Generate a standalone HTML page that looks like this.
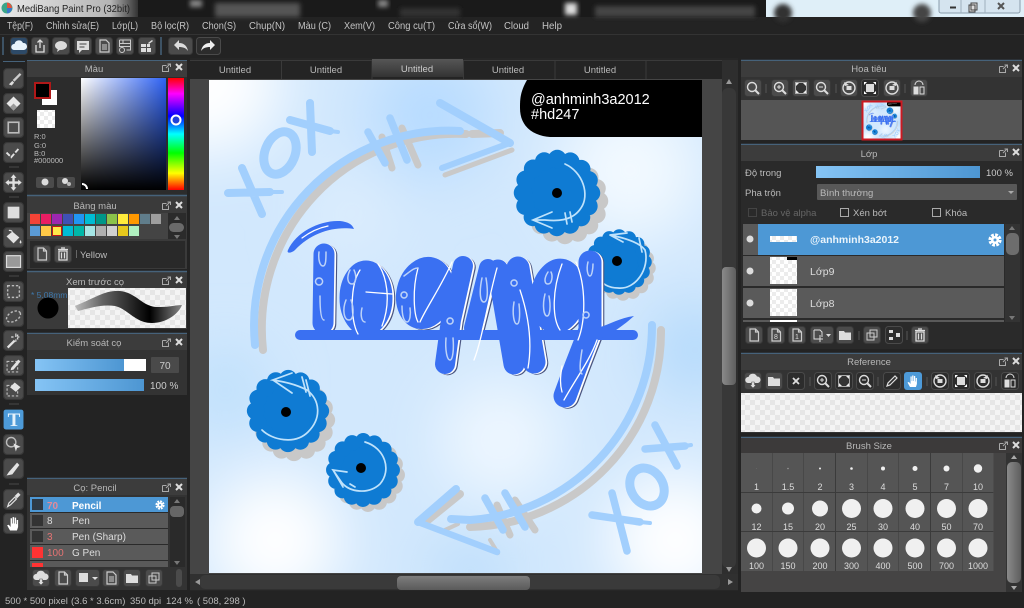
<!DOCTYPE html>
<html><head><meta charset="utf-8"><title>MediBang Paint Pro</title>
<style>
html,body{margin:0;padding:0;width:1024px;height:608px;background:#232323;overflow:hidden}
svg{display:block;overflow:hidden;filter:blur(.35px)}
text{font-family:"Liberation Sans","Noto Sans CJK SC",sans-serif;font-size:10px;fill:#c4c4c4}
.h{font-size:9.5px;fill:#b8b8b8;text-anchor:middle}
.s{font-size:9px;fill:#ddd;text-anchor:middle}
</style></head><body>
<svg xmlns="http://www.w3.org/2000/svg" width="1024" height="608" viewBox="0 0 1024 608">
<defs>
<pattern id="ck" width="8" height="8" patternUnits="userSpaceOnUse"><rect width="8" height="8" fill="#fff"/><rect width="4" height="4" fill="#ececec"/><rect x="4" y="4" width="4" height="4" fill="#ececec"/></pattern>
<pattern id="ck2" width="10" height="10" patternUnits="userSpaceOnUse"><rect width="10" height="10" fill="#f4f4f4"/><rect width="5" height="5" fill="#e6e6e6"/><rect x="5" y="5" width="5" height="5" fill="#e6e6e6"/></pattern>
<linearGradient id="bar" x1="0" x2="1"><stop offset="0" stop-color="#85c4f5"/><stop offset="1" stop-color="#4d96d2"/></linearGradient>
<linearGradient id="sv" x1="0" x2="1"><stop offset="0" stop-color="#fff"/><stop offset="1" stop-color="#2e62f5"/></linearGradient>
<linearGradient id="sv2" x1="0" x2="0" y1="0" y2="1"><stop offset="0" stop-color="#000" stop-opacity="0"/><stop offset="1" stop-color="#000"/></linearGradient>
<linearGradient id="hue" x1="0" x2="0" y1="0" y2="1"><stop offset="0" stop-color="#f00"/><stop offset=".14" stop-color="#f0f"/><stop offset=".34" stop-color="#00f"/><stop offset=".5" stop-color="#0ff"/><stop offset=".67" stop-color="#0f0"/><stop offset=".85" stop-color="#ff0"/><stop offset="1" stop-color="#f00"/></linearGradient>
<linearGradient id="tab" x1="0" x2="0" y1="0" y2="1"><stop offset="0" stop-color="#565656"/><stop offset="1" stop-color="#333"/></linearGradient>
<linearGradient id="tb" x1="0" x2="1"><stop offset="0" stop-color="#e8e8e8"/><stop offset=".8" stop-color="#b5b5b5"/><stop offset="1" stop-color="#333"/></linearGradient>
<linearGradient id="thv" x1="0" x2="1"><stop offset="0" stop-color="#8a8a8a"/><stop offset="1" stop-color="#5e5e5e"/></linearGradient>
<linearGradient id="thh" x1="0" x2="0" y1="0" y2="1"><stop offset="0" stop-color="#7d7d7d"/><stop offset="1" stop-color="#5a5a5a"/></linearGradient>
<filter id="b30" x="-30%" y="-30%" width="160%" height="160%"><feGaussianBlur stdDeviation="30"/></filter>
<filter id="b3" x="-30%" y="-100%" width="160%" height="300%"><feGaussianBlur stdDeviation="2.5"/></filter>
<clipPath id="cv"><rect x="209" y="80" width="493" height="493"/></clipPath>
<linearGradient id="stk" x1="0" x2="1"><stop offset="0" stop-color="#bbb"/><stop offset=".25" stop-color="#666"/><stop offset=".7" stop-color="#000"/><stop offset="1" stop-color="#888"/></linearGradient>

<g id="b"><rect x=".5" y=".5" width="17" height="17" rx="3" fill="#4b4b4b" stroke="#383838"/></g>
<g id="bd"><rect x=".5" y=".5" width="17" height="17" rx="3" fill="#2c2c2c" stroke="#4a4a4a"/></g>
<path id="pop" d="M.5 2.500h4M.5 2.500v6h6v-4M4 5l4-4M5.500 1H8.500V4" fill="none" stroke="#aaa"/>
<path id="x" d="M1 1l6 6M7 1l-6 6" stroke="#ddd" stroke-width="2" fill="none"/>
<g id="gear"><circle r="3.500" fill="#fff"/><circle r="4.500" fill="none" stroke="#fff" stroke-width="2.500" stroke-dasharray="2.400 1.130"/><circle r="1.300" fill="#4d98d5"/></g>

<g id="i-cloud"><path d="M4 13a3 3 0 0 1 .5-6 4.500 4.500 0 0 1 8.500-1 3.500 3.500 0 0 1 1 7z" fill="#e8f3fb"/></g>
<g id="i-share"><path d="M5 8v7h8V8M9 11V3M6.500 5.500L9 3l2.500 2.500" fill="none" stroke="#ddd" stroke-width="1.300"/></g>
<g id="i-bubble"><ellipse cx="9" cy="8.500" rx="6" ry="4.500" fill="#ddd"/><path d="M6 11l-1 4 4-3z" fill="#ddd"/></g>
<g id="i-comment"><path d="M3 4h12v9H8l-3 3v-3H3z" fill="#ddd"/><path d="M5.500 7h7M5.500 10h5" stroke="#444"/></g>
<g id="i-doc"><path d="M5 3h6l3 3v9H5z" fill="none" stroke="#ccc" stroke-width="1.200"/><path d="M7 8h5M7 10h5M7 12h5" stroke="#ccc"/></g>
<g id="i-list"><path d="M3.500 3h11v10h-4M3.500 3v7M3.500 6.500h11M3.500 9.500h11M7 3v4" fill="none" stroke="#ccc"/><circle cx="6" cy="13" r="2.500" fill="none" stroke="#ccc"/></g>
<g id="i-grid"><path d="M3 7h5v3H3zM9 7h3v3H9zM3 11h5v4H3zM9 11h4v4H9z" fill="#ddd"/><path d="M10 6l4-3 1 1-4 3z" fill="#ddd"/></g>
<g id="i-newdoc"><path d="M5 3h5.500L13.500 6v9H5zM10.500 3v3h3" fill="none" stroke="#ccc" stroke-width="1.200"/></g>
<g id="i-trash"><path d="M5 6v9h8V6zM4 4.500h10M7 3h4M7.500 7.500v6M10.500 7.500v6" fill="none" stroke="#ddd" stroke-width="1.300"/></g>
<g id="i-folder"><path d="M3 5h5l1 1.500h6V14H3z" fill="#ddd"/></g>
<g id="i-copy"><path d="M7 4h7v7H7zM4 7h7v7H4z" fill="#4b4b4b" stroke="#ccc"/></g>
<g id="i-merge"><path d="M4 4h4v3H4zM4 11h4v3H4zM11 7h4v4h-4z" fill="#ddd"/></g>
<g id="i-upload"><path d="M4 11a3 3 0 0 1 .5-6 4.500 4.500 0 0 1 8.500-.5 3.300 3.300 0 0 1 1 6.500z" fill="#ddd"/><path d="M7.500 10h3v3H12l-3 3-3-3h1.500z" fill="#ddd" stroke="#4b4b4b" stroke-width=".5"/></g>
<g id="i-z"><circle cx="8" cy="8" r="4.500" fill="none" stroke="#ddd" stroke-width="1.400"/><path d="M11 11l4 4" stroke="#ddd" stroke-width="2"/></g>
<g id="i-fit"><rect x="3.500" y="3.500" width="11" height="11" fill="#333" stroke="#aaa"/><path d="M4 4l3 0-3 3zM14 4v3l-3-3zM4 14v-3l3 3zM14 14h-3l3-3z" fill="#eee"/></g>
<g id="i-rl"><circle cx="9" cy="9" r="6" fill="none" stroke="#ddd" stroke-width="1.400"/><path d="M4 3l1 4 4-1z" fill="#ddd"/><rect x="6.500" y="7" width="5" height="4" fill="#ddd"/></g>
<g id="i-rr"><circle cx="9" cy="9" r="6" fill="none" stroke="#ddd" stroke-width="1.400"/><path d="M14 3l-1 4-4-1z" fill="#ddd"/><rect x="6.500" y="7" width="5" height="4" fill="#ddd"/></g>
<g id="i-center"><rect x="5" y="5" width="8" height="8" fill="#ddd"/><path d="M3 3l3 0-3 3zM15 3v3l-3-3zM3 15v-3l3 3zM15 15h-3l3-3z" fill="#fff"/></g>
<g id="i-flip"><path d="M4 15V8h4v7zM10 15V8h4v7z" fill="none" stroke="#ddd"/><path d="M4 8h4v7H4z" fill="#ddd"/><path d="M5 6a4 4 0 0 1 8 0" fill="none" stroke="#ddd"/></g>
<g id="i-pen"><path d="M4 14l1-3 7-7 2 2-7 7z" fill="none" stroke="#ddd" stroke-width="1.200"/></g>
<g id="i-hand"><path d="M6 15L3.500 10.500 5 10l1.500 2V4.500h1.200V9h.5V3.500h1.300V9h.5V4h1.200v5.500h.5V6h1.200v6l-1 3z" fill="#fff"/></g>

<g id="t-brush"><path d="M5 14l3-3 1.500 1.500-2 2.500z" fill="#ddd"/><path d="M9 11l6-6" stroke="#ccc" stroke-width="2"/></g>
<g id="t-eraser"><path d="M9 3l6 6-6 6-6-6z" fill="#e8e8e8"/><path d="M6 12l3-3 3 3-3 3z" fill="#999"/></g>
<g id="t-stroke"><rect x="4.500" y="4.500" width="9" height="9" fill="none" stroke="#bbb" stroke-width="1.400"/></g>
<g id="t-poly"><path d="M3 9l4 4 7-8" fill="none" stroke="#e2e2e2" stroke-width="1.600" stroke-dasharray="4 1.500"/></g>
<g id="t-move"><path d="M9 2l2.500 3H10v3h3V6.500L16 9l-3 2.500V10h-3v3h1.500L9 16l-2.500-3H8v-3H5v1.500L2 9l3-2.500V8h3V5H6.500z" fill="#e2e2e2"/></g>
<g id="t-fill"><rect x="4" y="4" width="10" height="10" fill="#ddd"/></g>
<g id="t-bucket"><path d="M3 8l5-4 6 5-5 5z" fill="#e2e2e2"/><path d="M8 4a3 3 0 0 0-3-1" stroke="#e2e2e2" fill="none"/><path d="M15 11c1 2 1 3 0 3s-1-1 0-3z" fill="#e2e2e2"/></g>
<g id="t-dr"><rect x="4" y="4" width="10" height="10" fill="none" stroke="#bbb" stroke-width="1.200" stroke-dasharray="2 1.500"/></g>
<g id="t-de"><ellipse cx="9" cy="9" rx="6.500" ry="4" transform="rotate(-30 9 9)" fill="none" stroke="#bbb" stroke-width="1.200" stroke-dasharray="2 1.500"/></g>
<g id="t-wand"><path d="M4 15l6-6" stroke="#e2e2e2" stroke-width="2"/><path d="M11 3v3M11 8v2M14 6h-2M9 6H7M13 4l-1 1M13 8l-1-1" stroke="#e2e2e2"/></g>
<g id="t-sp"><rect x="3.500" y="5.500" width="9" height="9" fill="none" stroke="#bbb" stroke-dasharray="2 1.500"/><path d="M7 11l6-7 2 1.500-6 7-2.500 .5z" fill="#e2e2e2"/></g>
<g id="t-se"><rect x="3.500" y="5.500" width="9" height="9" fill="none" stroke="#bbb" stroke-dasharray="2 1.500"/><path d="M10 3l5 4-4 4-5-4z" fill="#e2e2e2"/></g>
<g id="t-lasso"><circle cx="7" cy="7" r="4" fill="none" stroke="#bbb" stroke-width="1.200"/><path d="M9 8l6 3-3 1-1 3z" fill="#e2e2e2"/></g>
<g id="t-knife"><path d="M3 15l2-3 7-8 2 2-6 8z" fill="#e2e2e2"/></g>
<g id="t-drop"><path d="M4 15l1-3 5-5 1.500 1.500-5 5z" fill="none" stroke="#e2e2e2"/><path d="M10 6l3-3 2 2-3 3z" fill="#e2e2e2"/></g>

<g id="fl"><circle r="34" fill="#0f7bd3"/><circle r="33" fill="none" stroke="#0f7bd3" stroke-width="18" stroke-linecap="round" stroke-dasharray="0 12.959"/></g>
<g id="fg"><circle r="34" fill="#c8c8c8"/><circle r="33" fill="none" stroke="#c8c8c8" stroke-width="18" stroke-linecap="round" stroke-dasharray="0 12.959"/></g>

<g id="lshape" stroke-linecap="round" stroke-linejoin="round" fill="none">
<path d="M324 254L323 323" stroke-width="21"/>
<ellipse cx="366" cy="298" rx="26" ry="37" fill="currentColor"/>
<ellipse cx="425" cy="293" rx="28" ry="36" transform="rotate(14 425 293)" fill="currentColor"/>
<path d="M463 266L451 320L445 364" stroke-width="20"/>
<path d="M488 268L473 328" stroke-width="18"/>
<path d="M498 270L514 364" stroke-width="21"/>
<path d="M518 268L534 362" stroke-width="23"/>
<ellipse cx="558" cy="296" rx="27" ry="37" transform="rotate(8 558 296)" fill="currentColor"/>
<path d="M590 262L590 330L576 366L565 396" stroke-width="23"/>
</g>
<g id="art">
<rect x="209" y="80" width="493" height="493" fill="#d2e8fd"/>
<g clip-path="url(#cv)">
<g filter="url(#b30)">
<circle cx="205" cy="80" r="75" fill="#fff"/>
<circle cx="275" cy="540" r="66" fill="#fff"/>
<circle cx="675" cy="540" r="66" fill="#fff"/>
<circle cx="500" cy="440" r="60" fill="#eef7ff"/>
<circle cx="630" cy="170" r="70" fill="#f2f9ff"/>
<circle cx="430" cy="115" r="60" fill="#b7dbff"/>
<circle cx="225" cy="390" r="40" fill="#bcdffc"/>
<circle cx="695" cy="350" r="45" fill="#b2d9fb"/>
<circle cx="470" cy="572" r="35" fill="#b9dcfa"/>
<circle cx="350" cy="215" r="40" fill="#deeefd"/>
</g>
<g fill="none" stroke-linecap="round" stroke="#c9c9c9" stroke-width="8">
<path d="M466 134A195 195 0 0 0 263 350"/>
<path d="M472 134L500 133"/>
<path d="M661 330A195 195 0 0 1 470 527"/>
<path d="M382 137L392 168M402 128L418 165" stroke-width="7"/>
<path d="M497 505L510 535M515 500L535 530" stroke-width="7"/>
<path d="M445 175L512 150" stroke-width="5"/>
<path d="M460 494L428 520" stroke-width="8"/>
<path d="M445 530L458 524M490 540L498 553" stroke-width="4"/>
</g>
<g fill="none" stroke-linecap="round" stroke="#a2cffd" stroke-width="8">
<path d="M460 131A195 195 0 0 0 255 345"/>
<path d="M440 103L510 143" stroke-width="8"/>
<path d="M510 143L442 168" stroke-width="6"/>
<path d="M368 132L385 163M390 118L407 160" stroke-width="7.500"/>
<path d="M652 325A195 195 0 0 1 470 520L451 519"/>
<path d="M485 498L503 530M505 493L525 527" stroke-width="7.500"/>
<path d="M456 489L418 522" stroke-width="8"/>
<path d="M418 522L497 552" stroke-width="6.500"/>
<path d="M242 168L262 214M228 193L270 192M310 103L312 152M290 120L330 131" stroke-width="8"/>
<path d="M282 192L270 192M338 132L330 131" stroke-width="4"/>
<path d="M612 493L627 551M592 515L640 522M655 425L677 466M645 449L685 446" stroke-width="7.500"/>
<path d="M640 522L650 523M685 446L691 445" stroke-width="4"/>
<ellipse cx="280" cy="153" rx="15" ry="22" transform="rotate(22 280 153)" stroke-width="9"/>
<ellipse cx="647" cy="487" rx="16" ry="20" transform="rotate(-32 647 487)" stroke-width="9"/>
</g>
<use href="#fg" transform="translate(565,201) scale(1.030)"/>
<use href="#fg" transform="translate(623,268) scale(.78)"/>
<use href="#fg" transform="translate(294,420) scale(.98)"/>
<use href="#fg" transform="translate(368,475) scale(.88)"/>
<use href="#fl" transform="translate(557,193) scale(1.030)"/>
<use href="#fl" transform="translate(619,262) scale(.78)"/>
<use href="#fl" transform="translate(288,411) scale(.98)"/>
<use href="#fl" transform="translate(363,470) scale(.88)"/>
<g fill="#000"><circle cx="557" cy="193" r="5"/><circle cx="617" cy="261" r="5"/><circle cx="286" cy="412" r="5"/><circle cx="361" cy="468" r="5"/></g>
<g fill="none" stroke="#bfe2fb" stroke-width="1.700" stroke-linecap="round">
<path d="M565 164C583 172 590 195 581 208C572 222 555 221 545 220L533 220M552 212L533 220L552 228M565 213L567 224M570 212L572 222"/>
<path d="M645 250C650 268 636 290 618 288C608 288 602 284 598 277M645 250C640 243 625 238 610 235L627 233M610 235L623 242M639 238L642 252"/>
<path d="M262 430C272 440 295 445 308 432C322 418 320 400 307 390C295 384 285 382 273 380L292 373M273 380L292 393M302 377L306 392M306 380L310 396"/>
<path d="M365 442C385 448 392 470 380 484C368 495 350 492 342 483L333 470L347 472M333 470L343 487M350 484L355 487"/>
</g>
<use href="#lshape" transform="translate(2.800,1.200)" stroke="#4a5580" color="#4a5580"/>
<use href="#lshape" transform="translate(1.700,.5)" stroke="#fff" color="#fff"/>
<rect x="295" y="330" width="343" height="10" rx="5" fill="#3a70f2"/>
<use href="#lshape" stroke="#3a70f2" color="#3a70f2"/>
<path d="M598 328C610 324 620 318 634 316C625 324 610 336 596 340z" fill="#3a70f2"/>
<path d="M288 250C296 232 320 220 340 221C348 222 352 224 354 229C335 226 312 232 295 250C292 253 286 254 288 250z" fill="#3a70f2"/>
<g fill="none" stroke="#fff" stroke-width="1.300" stroke-linecap="round">
<path d="M360 270C350 285 350 320 358 334M378 264C386 275 392 300 382 326M366 292L392 294"/>
<path d="M418 268C412 290 414 315 418 322M452 262C442 285 425 310 420 322"/>
<path d="M474 360C482 340 488 300 497 268M520 290C530 320 532 345 528 368"/>
<path d="M562 264C552 290 552 318 560 330M576 262C586 285 586 320 578 340M564 400C575 380 590 360 597 340M562 366C560 378 560 385 562 392"/>
<path d="M302 238C310 232 318 228 328 226" stroke-width="1.200"/>
</g>
<g fill="none" stroke="#bcd2f8" stroke-width="1.500" stroke-linecap="round">
<path d="M319 252c-1 8 1 14 4 14s3-7 3-14M319 278a3.500 3.500 0 1 0 .1 0M320 296c0 14 1 24 4 24"/>
<path d="M350 270c-4 8-2 14 2 14s5-8 2-14M346 300c-4 10-2 20 3 20s5-12 2-20M362 308c-2 8 0 14 3 14"/>
<path d="M404 276c8-6 10-8 14-8M404 292a3 3 0 1 0 .1 0M402 306c0 10 2 16 5 16s4-8 3-14"/>
<path d="M450 318a3 3 0 1 0 .1 0M446 338c-1 12 1 22 4 22s4-12 3-22"/>
<path d="M482 278c-3 14-2 24 2 24s4-12 2-24M514 280a3 3 0 1 0 .1 0M514 302c-2 12 0 22 3 22s3-12 2-20"/>
<path d="M548 272c-4 6-4 12 0 12s5-8 3-12M545 294c-3 12-1 22 2 22s4-10 2-20M588 262c-2 8 0 14 2 14s3-8 3-12M586 312a3 3 0 1 0 .1 0M582 350c-2 12-3 22 0 24"/>
</g>
<path d="M527 80C520 92 520 100 520 108C520 128 535 136 550 137L702 137L702 80Z" fill="#000"/>
<text x="531" y="104" style="font-size:14.500px;fill:#fff">@anhminh3a2012</text>
<text x="531" y="119" style="font-size:14.500px;fill:#fff">#hd247</text>
</g>
</g>
</defs>

<rect width="1024" height="608" fill="#232323"/>

<!-- title bar -->
<rect x="0" y="0" width="1024" height="17" fill="#1a1a1a"/>
<rect x="0" y="0" width="138" height="17" fill="url(#tb)"/>
<g>
<rect x="190" y="0" width="12" height="7" fill="#888" filter="url(#b3)"/>
<rect x="215" y="3" width="85" height="14" fill="#555" filter="url(#b3)"/>
<rect x="378" y="0" width="10" height="7" fill="#888" filter="url(#b3)"/>
<rect x="400" y="8" width="60" height="9" fill="#333" filter="url(#b3)"/>
<rect x="565" y="3" width="12" height="12" fill="#ddd" filter="url(#b3)"/>
<rect x="595" y="6" width="160" height="11" fill="#444" filter="url(#b3)"/>
</g>
<rect x="766" y="0" width="258" height="17" fill="#dfeff8"/>
<circle cx="783" cy="13" r="9" fill="#333" filter="url(#b3)"/>
<circle cx="922" cy="13" r="9" fill="#444" filter="url(#b3)"/>
<rect x="939" y="-2" width="81" height="15" rx="2" fill="#d5e4ef" stroke="#8a9cab"/>
<path d="M961 0v13M985 0v13" stroke="#9fb0bd"/>
<path d="M950 7.500h6" stroke="#333" stroke-width="2"/>
<path d="M971 3h6v7h-6zM969 5h6v7h-6z" fill="#ddd" stroke="#444"/>
<path d="M998 3l6 6M1004 3l-6 6" stroke="#555" stroke-width="2"/>
<circle cx="7" cy="8" r="5.500" fill="#3aa58a"/><path d="M7 8V2.500A5.500 5.500 0 0 1 12 8z" fill="#e0533d"/><path d="M7 8h5a5.500 5.500 0 0 1-5 5.500z" fill="#3a76c8"/>
<text x="17" y="12" style="font-size:10.500px;fill:#222" textLength="113" lengthAdjust="spacingAndGlyphs">MediBang Paint Pro (32bit)</text>

<!-- menu -->
<g>
<text x="7" y="29" textLength="26" lengthAdjust="spacingAndGlyphs">Tệp(F)</text>
<text x="46" y="29" textLength="53" lengthAdjust="spacingAndGlyphs">Chỉnh sửa(E)</text>
<text x="112" y="29" textLength="26" lengthAdjust="spacingAndGlyphs">Lớp(L)</text>
<text x="151" y="29" textLength="38" lengthAdjust="spacingAndGlyphs">Bộ lọc(R)</text>
<text x="202" y="29" textLength="34" lengthAdjust="spacingAndGlyphs">Chọn(S)</text>
<text x="249" y="29" textLength="36" lengthAdjust="spacingAndGlyphs">Chụp(N)</text>
<text x="298" y="29" textLength="33" lengthAdjust="spacingAndGlyphs">Màu (C)</text>
<text x="344" y="29" textLength="31" lengthAdjust="spacingAndGlyphs">Xem(V)</text>
<text x="388" y="29" textLength="47" lengthAdjust="spacingAndGlyphs">Công cụ(T)</text>
<text x="448" y="29" textLength="44" lengthAdjust="spacingAndGlyphs">Cửa sổ(W)</text>
<text x="504" y="29" textLength="25" lengthAdjust="spacingAndGlyphs">Cloud</text>
<text x="542" y="29" textLength="20" lengthAdjust="spacingAndGlyphs">Help</text>
</g>
<path d="M0 34.500h1024" stroke="#333"/>
<path d="M3 37v18M161 37v18" stroke="#46627a" stroke-width="1.500"/>

<!-- toolbar -->
<g transform="translate(10,37)"><rect x=".5" y=".5" width="17" height="17" rx="3" fill="#2d4a68" stroke="#3a3a3a"/><use href="#i-cloud"/></g>
<g transform="translate(31,37)"><use href="#b"/><use href="#i-share"/></g>
<g transform="translate(52,37)"><use href="#b"/><use href="#i-bubble"/></g>
<g transform="translate(74,37)"><use href="#b"/><use href="#i-comment"/></g>
<g transform="translate(95,37)"><use href="#b"/><use href="#i-doc"/></g>
<g transform="translate(116,37)"><use href="#b"/><use href="#i-list"/></g>
<g transform="translate(138,37)"><use href="#b"/><use href="#i-grid"/></g>
<rect x="168.500" y="37.500" width="24" height="17" rx="3" fill="#4b4b4b" stroke="#383838"/>
<path d="M174 45l5-5v3c5 0 8 3 9 8-2-3-5-4-9-4v3z" fill="#ddd"/>
<rect x="196.500" y="37.500" width="24" height="17" rx="3" fill="#2c2c2c" stroke="#4a4a4a"/>
<path d="M215 45l-5-5v3c-5 0-8 3-9 8 2-3 5-4 9-4v3z" fill="#eee"/>

<!-- left tool strip -->
<path d="M3 61.500h22" stroke="#46627a"/>
<g>
<g transform="translate(3,68) scale(1.170)"><use href="#b"/><use href="#t-brush"/></g>
<g transform="translate(3,93) scale(1.170)"><use href="#b"/><use href="#t-eraser"/></g>
<g transform="translate(3,117) scale(1.170)"><use href="#b"/><use href="#t-stroke"/></g>
<g transform="translate(3,142) scale(1.170)"><use href="#b"/><use href="#t-poly"/></g>
<g transform="translate(3,172) scale(1.170)"><use href="#b"/><use href="#t-move"/></g>
<g transform="translate(3,202) scale(1.170)"><use href="#b"/><use href="#t-fill"/></g>
<g transform="translate(3,227) scale(1.170)"><use href="#b"/><use href="#t-bucket"/></g>
<g transform="translate(3,251) scale(1.170)"><use href="#b"/><rect x="3" y="4" width="12" height="10" fill="#999" stroke="#ddd"/></g>
<g transform="translate(3,281) scale(1.170)"><use href="#b"/><use href="#t-dr"/></g>
<g transform="translate(3,306) scale(1.170)"><use href="#b"/><use href="#t-de"/></g>
<g transform="translate(3,330) scale(1.170)"><use href="#b"/><use href="#t-wand"/></g>
<g transform="translate(3,355) scale(1.170)"><use href="#b"/><use href="#t-sp"/></g>
<g transform="translate(3,379) scale(1.170)"><use href="#b"/><use href="#t-se"/></g>
<g transform="translate(3,409) scale(1.170)"><rect x=".5" y=".5" width="17" height="17" rx="2" fill="#4d9ad8"/></g>
<text x="14" y="426" style="font-family:'Liberation Serif',serif;font-size:19px;font-weight:bold;fill:#e6f2fb;text-anchor:middle">T</text>
<g transform="translate(3,434) scale(1.170)"><use href="#b"/><use href="#t-lasso"/></g>
<g transform="translate(3,458) scale(1.170)"><use href="#b"/><use href="#t-knife"/></g>
<g transform="translate(3,489) scale(1.170)"><use href="#b"/><use href="#t-drop"/></g>
<g transform="translate(3,513) scale(1.170)"><use href="#b"/><use href="#i-hand"/></g>
</g>
<path d="M9 167h10M9 197h10M9 276h10M9 404h10M9 484h10" stroke="#4a4a4a"/>

<!-- Colour panel -->
<rect x="27" y="60" width="160" height="135" fill="#2c2c2c"/>
<rect x="27" y="60" width="160" height="17" fill="#3c3c3c"/><path d="M27 60.500h160" stroke="#46627a"/>
<text class="h" x="94" y="72">Màu</text>
<use href="#pop" x="162" y="63"/><use href="#x" x="175" y="63"/>
<rect x="81" y="78" width="85" height="112" fill="url(#sv)"/><rect x="81" y="78" width="85" height="112" fill="url(#sv2)"/>
<rect x="168" y="78" width="16" height="112" fill="url(#hue)"/>
<circle cx="176" cy="120" r="4.500" fill="#2242d8" stroke="#fff" stroke-width="2"/>
<path d="M82 184a5 5 0 0 1 5 5" stroke="#fff" stroke-width="2" fill="none"/>
<rect x="42" y="90" width="15" height="15" fill="#fff"/>
<rect x="35" y="83" width="15" height="15" fill="#000" stroke="#b01818" stroke-width="2"/>
<rect x="37" y="110" width="18" height="18" fill="url(#ck)"/>
<text x="34" y="139" style="font-size:7.500px;fill:#bbb">R:0</text><text x="34" y="148" style="font-size:7.500px;fill:#bbb">G:0</text><text x="34" y="156" style="font-size:7.500px;fill:#bbb">B:0</text><text x="34" y="163" style="font-size:7.500px;fill:#bbb">#000000</text>
<rect x="36" y="177" width="18" height="11" rx="2" fill="#4b4b4b"/><circle cx="45" cy="182" r="3.500" fill="#ddd"/>
<rect x="57" y="177" width="18" height="11" rx="2" fill="#4b4b4b"/><circle cx="65" cy="181" r="3" fill="#ddd"/><circle cx="69" cy="184" r="2" fill="#bbb"/>

<!-- Palette panel -->
<rect x="27" y="195" width="160" height="74" fill="#3a3a3a"/><path d="M27 195.500h160" stroke="#46627a" stroke-width="1.500"/>
<text class="h" x="95" y="209">Bảng màu</text>
<use href="#pop" x="162" y="201"/><use href="#x" x="175" y="201"/>
<rect x="27" y="213" width="141" height="26" fill="#444"/>
<rect x="168" y="213" width="18" height="26" fill="#2b2b2b"/>
<rect x="169" y="223" width="15" height="9" rx="4.500" fill="#6a6a6a"/>
<path d="M177 216l3 4h-6zM177 239l3-4h-6z" fill="#777"/>
<g>
<rect x="30" y="214" width="10" height="10" fill="#f44336"/><rect x="41" y="214" width="10" height="10" fill="#e91e63"/><rect x="52" y="214" width="10" height="10" fill="#9c27b0"/><rect x="63" y="214" width="10" height="10" fill="#3f51b5"/><rect x="74" y="214" width="10" height="10" fill="#2196f3"/><rect x="85" y="214" width="10" height="10" fill="#00bcd4"/><rect x="96" y="214" width="10" height="10" fill="#009688"/><rect x="107" y="214" width="10" height="10" fill="#8bc34a"/><rect x="118" y="214" width="10" height="10" fill="#ffeb3b"/><rect x="129" y="214" width="10" height="10" fill="#ff9800"/><rect x="140" y="214" width="10" height="10" fill="#607d8b"/><rect x="151" y="214" width="10" height="10" fill="#9e9e9e"/>
<rect x="30" y="226" width="10" height="10" fill="#5b9bd5"/><rect x="41" y="226" width="10" height="10" fill="#ffc947"/><rect x="52.500" y="226.500" width="9" height="9" fill="#ffe94a" stroke="#c01818"/><rect x="63" y="226" width="10" height="10" fill="#00bcd4"/><rect x="74" y="226" width="10" height="10" fill="#00b8a9"/><rect x="85" y="226" width="10" height="10" fill="#a5e5e5"/><rect x="96" y="226" width="10" height="10" fill="#b0b0b0"/><rect x="107" y="226" width="10" height="10" fill="#d0d0d0"/><rect x="118" y="226" width="10" height="10" fill="#e6c91c"/><rect x="129" y="226" width="10" height="10" fill="#b0f0c0"/>
</g>
<rect x="30" y="241" width="155" height="27" fill="#292929"/>
<g transform="translate(33,245)"><use href="#b"/><use href="#i-newdoc"/></g>
<g transform="translate(54,245)"><use href="#b"/><use href="#i-trash"/></g>
<path d="M76.500 250v8" stroke="#666"/>
<text x="80" y="258" style="font-size:9.500px;fill:#bbb">Yellow</text>

<!-- Brush preview -->
<rect x="27" y="271" width="160" height="58" fill="#3a3a3a"/><path d="M27 271.500h160" stroke="#46627a" stroke-width="1.500"/>
<text class="h" x="95" y="285">Xem trước cọ</text>
<use href="#pop" x="162" y="276"/><use href="#x" x="175" y="276"/>
<rect x="68" y="288" width="118" height="40" fill="url(#ck2)"/>
<text x="31" y="298" style="font-size:8.500px;fill:#3f78ab">* 5.08mm</text>
<circle cx="48" cy="308" r="10.500" fill="#000"/>
<path d="M75 306C95 298 105 290 120 291C138 293 142 308 160 307C170 307 176 305 182 305C178 315 165 323 152 323C135 323 128 309 115 306C102 304 90 308 78 311Z" fill="url(#stk)"/>

<!-- Brush control -->
<rect x="27" y="333" width="160" height="62" fill="#333"/><path d="M27 333.500h160" stroke="#46627a" stroke-width="1.500"/>
<rect x="27" y="334" width="160" height="16" fill="#3c3c3c"/>
<text class="h" x="94" y="346">Kiểm soát cọ</text>
<use href="#pop" x="162" y="338"/><use href="#x" x="175" y="338"/>
<rect x="35" y="359" width="111" height="12" fill="#fff"/><rect x="35" y="359" width="89" height="12" fill="url(#bar)"/>
<rect x="151" y="357" width="28" height="16" rx="1" fill="#4a4a4a"/><text x="165" y="369" style="font-size:10px;fill:#ccc;text-anchor:middle">70</text>
<rect x="35" y="379" width="109" height="12" fill="url(#bar)"/>
<text x="150" y="389" style="font-size:10px;fill:#ccc">100 %</text>

<!-- Brush panel -->
<rect x="27" y="478" width="160" height="112" fill="#333"/><path d="M27 478.500h160" stroke="#46627a" stroke-width="1.500"/>
<rect x="27" y="479" width="160" height="16" fill="#3c3c3c"/>
<text class="h" x="95" y="491">Cọ: Pencil</text>
<use href="#pop" x="162" y="483"/><use href="#x" x="175" y="483"/>
<rect x="30" y="497" width="138" height="70" fill="#2a2a2a"/>
<rect x="30" y="497" width="138" height="15" fill="#4d98d5"/>
<rect x="30" y="513" width="138" height="15" fill="#5a5a5a"/>
<rect x="30" y="529" width="138" height="15" fill="#5a5a5a"/>
<rect x="30" y="545" width="138" height="15" fill="#5a5a5a"/>
<rect x="30" y="561" width="138" height="6" fill="#5a5a5a"/>
<rect x="32" y="499" width="11" height="11" fill="#2f3a44"/><rect x="32" y="515" width="11" height="11" fill="#333"/><rect x="32" y="531" width="11" height="11" fill="#333"/><rect x="32" y="547" width="11" height="11" fill="#f33"/><rect x="32" y="563" width="11" height="4" fill="#f33"/>
<text x="47" y="509" style="font-weight:bold;fill:#e38a9a">70</text><text x="72" y="509" style="font-weight:bold;fill:#fff">Pencil</text>
<text x="47" y="524" style="fill:#ddd">8</text><text x="72" y="524" style="fill:#ddd">Pen</text>
<text x="47" y="540" style="fill:#e57373">3</text><text x="72" y="540" style="fill:#ddd">Pen (Sharp)</text>
<text x="47" y="556" style="fill:#e57373">100</text><text x="72" y="556" style="fill:#ddd">G Pen</text>
<use href="#gear" transform="translate(160,505) scale(.8)"/>
<rect x="170" y="497" width="15" height="70" fill="#2a2a2a"/>
<rect x="170" y="506" width="14" height="11" rx="4" fill="#666"/>
<path d="M177 499l3 4h-6zM177 565l3-4h-6z" fill="#777"/>
<g transform="translate(32,569)"><use href="#b"/><use href="#i-upload"/></g>
<g transform="translate(54,569)"><use href="#b"/><use href="#i-newdoc"/></g>
<rect x="75.500" y="569.500" width="24" height="17" rx="3" fill="#4b4b4b" stroke="#383838"/><rect x="79" y="573" width="9" height="9" fill="#ddd"/><path d="M92 577h6l-3 3z" fill="#ddd"/>
<g transform="translate(102,569)"><use href="#b"/><use href="#i-doc"/></g>
<g transform="translate(123,569)"><use href="#b"/><use href="#i-folder"/></g>
<g transform="translate(145,569)"><use href="#b"/><use href="#i-copy"/></g>
<rect x="176" y="569" width="6" height="18" rx="3" fill="#4b4b4b"/>

<!-- centre -->
<rect x="190" y="58" width="548" height="533" fill="#262626"/>
<rect x="190" y="60" width="532" height="515" fill="#454545"/>
<rect x="190" y="60" width="532" height="19" fill="#242424"/>
<path d="M190 60.500h532M281.500 60v19M372 60v19M463.500 60v19M555 60v19M646 60v19" stroke="#3a3a3a"/>
<rect x="372" y="59" width="91" height="18" fill="url(#tab)"/>
<text class="h" x="235" y="73">Untitled</text><text class="h" x="326" y="73">Untitled</text><text class="h" x="417" y="72" style="fill:#ccc">Untitled</text><text class="h" x="508" y="73">Untitled</text><text class="h" x="600" y="73">Untitled</text>
<use href="#art"/>
<rect x="722" y="60" width="16" height="515" fill="#2e2e2e"/>
<rect x="722" y="88" width="14" height="480" rx="6" fill="#383838"/>
<rect x="722" y="267" width="14" height="118" rx="4" fill="url(#thv)"/>
<path d="M729 79l3 5h-6zM729 572l3-5h-6z" fill="#999"/>
<rect x="190" y="574" width="548" height="16" fill="#303030"/>
<rect x="200" y="575" width="520" height="14" rx="5" fill="#3a3a3a"/>
<rect x="397" y="576" width="133" height="14" rx="4" fill="url(#thh)"/>
<path d="M195 582l5-3v6zM733 582l-5-3v6z" fill="#999"/>

<!-- status -->
<text x="5" y="604" style="font-size:9.500px;fill:#bbb">500 * 500 pixel</text>
<text x="71" y="604" style="font-size:9.500px;fill:#bbb">(3.6 * 3.6cm)</text>
<text x="130" y="604" style="font-size:9.500px;fill:#bbb">350 dpi</text>
<text x="166" y="604" style="font-size:9.500px;fill:#bbb">124 %</text>
<text x="197" y="604" style="font-size:9.500px;fill:#bbb">( 508, 298 )</text>

<!-- Navigator -->
<rect x="741" y="60" width="281" height="80" fill="#555"/>
<path d="M741 60.500h281" stroke="#46627a" stroke-width="1.500"/>
<rect x="741" y="61" width="281" height="16" fill="#3c3c3c"/>
<text class="h" x="869" y="72">Hoa tiêu</text>
<use href="#pop" x="999" y="64"/><use href="#x" x="1012" y="64"/>
<rect x="741" y="77" width="281" height="23" fill="#333"/>
<g transform="translate(744,79)"><use href="#b"/><use href="#i-z"/></g>
<g transform="translate(771,79)"><use href="#b"/><use href="#i-z"/><path d="M6 8h4M8 6v4" stroke="#ddd"/></g>
<g transform="translate(792,79)"><use href="#b"/><use href="#i-fit"/></g>
<g transform="translate(813,79)"><use href="#b"/><use href="#i-z"/><path d="M6 8h4" stroke="#ddd"/></g>
<g transform="translate(840,79)"><use href="#b"/><use href="#i-rl"/></g>
<g transform="translate(861,79)"><use href="#bd"/><use href="#i-center"/></g>
<g transform="translate(883,79)"><use href="#b"/><use href="#i-rr"/></g>
<g transform="translate(910,79)"><use href="#b"/><use href="#i-flip"/></g>
<path d="M766 84v9M836 84v9M905 84v9" stroke="#555"/>
<g transform="translate(863,102) scale(.0771) translate(-209,-80)"><use href="#art"/></g>
<rect x="862.500" y="101.500" width="39" height="38" fill="none" stroke="#cc1a22" stroke-width="2"/>

<!-- Layer -->
<rect x="741" y="144" width="281" height="205" fill="#2a2a2a"/>
<path d="M741 144.500h281" stroke="#46627a" stroke-width="1.500"/>
<rect x="741" y="145" width="281" height="16" fill="#3c3c3c"/>
<text class="h" x="869" y="157">Lớp</text>
<use href="#pop" x="999" y="148"/><use href="#x" x="1012" y="148"/>
<text x="745" y="176" style="font-size:9.500px;fill:#bbb">Độ trong</text>
<rect x="816" y="166" width="164" height="12" fill="url(#bar)"/>
<text x="986" y="176" style="font-size:9.500px;fill:#ccc">100 %</text>
<text x="745" y="196" style="font-size:9.500px;fill:#bbb">Pha trộn</text>
<rect x="817" y="184" width="200" height="16" rx="1" fill="#585858"/>
<text x="820" y="196" style="font-size:9.500px;fill:#bbb">Bình thường</text>
<path d="M1008 191h6l-3 3z" fill="#aaa"/>
<rect x="748.500" y="208.500" width="8" height="8" fill="none" stroke="#444"/>
<text x="761" y="216" style="font-size:9.500px;fill:#666">Bảo vệ alpha</text>
<rect x="840.500" y="208.500" width="8" height="8" fill="none" stroke="#aaa"/>
<text x="853" y="216" style="font-size:9.500px;fill:#bbb">Xén bớt</text>
<rect x="932.500" y="208.500" width="8" height="8" fill="none" stroke="#aaa"/>
<text x="945" y="216" style="font-size:9.500px;fill:#bbb">Khóa</text>
<rect x="743" y="224" width="261" height="98" fill="#2a2a2a"/>
<rect x="743" y="224" width="15" height="31" fill="#5a5a5a"/><rect x="758" y="224" width="246" height="31" fill="#4d98d5"/>
<rect x="743" y="256" width="261" height="30" fill="#5a5a5a"/>
<rect x="743" y="288" width="261" height="30" fill="#5a5a5a"/>
<rect x="743" y="320" width="261" height="2" fill="#5a5a5a"/>
<circle cx="750" cy="239" r="3.500" fill="#ddd"/><circle cx="750" cy="271" r="3.500" fill="#ddd"/><circle cx="750" cy="303" r="3.500" fill="#ddd"/>
<rect x="770" y="236" width="27" height="6" fill="url(#ck)"/>
<rect x="770" y="257" width="27" height="27" fill="url(#ck)"/><rect x="787" y="257" width="10" height="3" fill="#000"/>
<rect x="770" y="289" width="27" height="27" fill="url(#ck)"/>
<rect x="770" y="320" width="27" height="2" fill="#fff"/>
<text x="810" y="243" style="font-size:10.500px;font-weight:bold;fill:#eaf4fb">@anhminh3a2012</text>
<text x="810" y="275" style="font-size:10.500px;fill:#ddd">Lớp9</text>
<text x="810" y="307" style="font-size:10.500px;fill:#ddd">Lớp8</text>
<use href="#gear" transform="translate(995,240) scale(1.150)"/>
<rect x="1005" y="224" width="15" height="98" fill="#333"/>
<rect x="1006" y="233" width="13" height="22" rx="5" fill="#6d6d6d"/>
<path d="M1012 226l3 4h-6zM1012 320l3-4h-6z" fill="#777"/>
<g transform="translate(745,326)"><use href="#b"/><use href="#i-newdoc"/></g>
<g transform="translate(767,326)"><use href="#b"/><use href="#i-newdoc"/><text x="9" y="13" style="font-size:7px;fill:#ddd;text-anchor:middle">8</text></g>
<g transform="translate(788,326)"><use href="#b"/><use href="#i-newdoc"/><text x="9" y="13" style="font-size:7px;fill:#ddd;text-anchor:middle">1</text></g>
<rect x="810.500" y="326.500" width="23" height="17" rx="3" fill="#4b4b4b" stroke="#383838"/><path d="M814 330h6l2 2v5M814 330v9h3M820 335v7M817 339h6" stroke="#ddd" fill="none"/><path d="M826 334h5l-2.500 3z" fill="#ddd"/>
<g transform="translate(836,326)"><use href="#b"/><use href="#i-folder"/></g>
<g transform="translate(863,326)"><use href="#b"/><use href="#i-copy"/></g>
<g transform="translate(885,326)"><use href="#bd"/><use href="#i-merge"/></g>
<g transform="translate(911,326)"><use href="#b"/><use href="#i-trash"/></g>
<path d="M859 331v9M907 331v9" stroke="#555"/>

<!-- Reference -->
<rect x="741" y="353" width="281" height="80" fill="#333"/>
<path d="M741 353.500h281" stroke="#46627a" stroke-width="1.500"/>
<rect x="741" y="354" width="281" height="16" fill="#3c3c3c"/>
<text class="h" x="869" y="365">Reference</text>
<use href="#pop" x="999" y="357"/><use href="#x" x="1012" y="357"/>
<g transform="translate(744,372)"><use href="#b"/><use href="#i-upload"/></g>
<g transform="translate(765,372)"><use href="#b"/><use href="#i-folder"/></g>
<g transform="translate(787,372)"><use href="#bd"/><path d="M6 6l6 6M12 6l-6 6" stroke="#ddd" stroke-width="1.800"/></g>
<g transform="translate(814,372)"><use href="#bd"/><use href="#i-z"/><path d="M6 8h4M8 6v4" stroke="#ddd"/></g>
<g transform="translate(835,372)"><use href="#bd"/><use href="#i-fit"/></g>
<g transform="translate(856,372)"><use href="#bd"/><use href="#i-z"/><path d="M6 8h4" stroke="#ddd"/></g>
<g transform="translate(883,372)"><use href="#bd"/><use href="#i-pen"/></g>
<g transform="translate(904,372)"><rect width="18" height="18" rx="3" fill="#4d9ad8"/><use href="#i-hand"/></g>
<g transform="translate(931,372)"><use href="#bd"/><use href="#i-rl"/></g>
<g transform="translate(952,372)"><use href="#bd"/><use href="#i-center"/></g>
<g transform="translate(974,372)"><use href="#bd"/><use href="#i-rr"/></g>
<g transform="translate(1001,372)"><use href="#bd"/><use href="#i-flip"/></g>
<path d="M810 377v9M878 377v9M927 377v9M996 377v9" stroke="#555"/>
<rect x="741" y="393" width="281" height="39" fill="url(#ck2)"/>

<!-- Brush Size -->
<rect x="741" y="437" width="281" height="155" fill="#454444"/>
<path d="M741 437.500h281" stroke="#46627a" stroke-width="1.500"/>
<rect x="741" y="438" width="281" height="15" fill="#3c3a3a"/>
<text class="h" x="869" y="449">Brush Size</text>
<use href="#pop" x="999" y="441"/><use href="#x" x="1012" y="441"/>
<rect x="741" y="453" width="252" height="118" fill="#3b3b3b"/>
<g fill="#555">
<rect x="741" y="453" width="31" height="39"/><rect x="772.500" y="453" width="31" height="39"/><rect x="804" y="453" width="31" height="39"/><rect x="836" y="453" width="31" height="39"/><rect x="867.500" y="453" width="31" height="39"/><rect x="899" y="453" width="31" height="39"/><rect x="931" y="453" width="31" height="39"/><rect x="962.500" y="453" width="31" height="39"/>
<rect x="741" y="493" width="31" height="38"/><rect x="772.500" y="493" width="31" height="38"/><rect x="804" y="493" width="31" height="38"/><rect x="836" y="493" width="31" height="38"/><rect x="867.500" y="493" width="31" height="38"/><rect x="899" y="493" width="31" height="38"/><rect x="931" y="493" width="31" height="38"/><rect x="962.500" y="493" width="31" height="38"/>
<rect x="741" y="532" width="31" height="39"/><rect x="772.500" y="532" width="31" height="39"/><rect x="804" y="532" width="31" height="39"/><rect x="836" y="532" width="31" height="39"/><rect x="867.500" y="532" width="31" height="39"/><rect x="899" y="532" width="31" height="39"/><rect x="931" y="532" width="31" height="39"/><rect x="962.500" y="532" width="31" height="39"/>
</g>
<g fill="#f0f0f0">
<circle cx="756.500" cy="468.500" r=".4" fill="#777"/><circle cx="788" cy="468.500" r=".8" fill="#999"/><circle cx="820" cy="468.500" r="1"/><circle cx="851.500" cy="468.500" r="1.300"/><circle cx="883" cy="468.500" r="2"/><circle cx="915" cy="468.500" r="2.500"/><circle cx="946.500" cy="468.500" r="3"/><circle cx="978" cy="468.500" r="4.200"/>
<circle cx="756.500" cy="508.500" r="5"/><circle cx="788" cy="508.500" r="6"/><circle cx="820" cy="508.500" r="8"/><circle cx="851.500" cy="508.500" r="9.500"/><circle cx="883" cy="508.500" r="9.500"/><circle cx="915" cy="508.500" r="9.500"/><circle cx="946.500" cy="508.500" r="9.500"/><circle cx="978" cy="508.500" r="9.500"/>
<circle cx="756.500" cy="548" r="9.500"/><circle cx="788" cy="548" r="9.500"/><circle cx="820" cy="548" r="9.500"/><circle cx="851.500" cy="548" r="9.500"/><circle cx="883" cy="548" r="9.500"/><circle cx="915" cy="548" r="9.500"/><circle cx="946.500" cy="548" r="9.500"/><circle cx="978" cy="548" r="9.500"/>
</g>
<text class="s" x="756.500" y="490">1</text><text class="s" x="788" y="490">1.5</text><text class="s" x="820" y="490">2</text><text class="s" x="851.500" y="490">3</text><text class="s" x="883" y="490">4</text><text class="s" x="915" y="490">5</text><text class="s" x="946.500" y="490">7</text><text class="s" x="978" y="490">10</text>
<text class="s" x="756.500" y="530">12</text><text class="s" x="788" y="530">15</text><text class="s" x="820" y="530">20</text><text class="s" x="851.500" y="530">25</text><text class="s" x="883" y="530">30</text><text class="s" x="915" y="530">40</text><text class="s" x="946.500" y="530">50</text><text class="s" x="978" y="530">70</text>
<text class="s" x="756.500" y="569">100</text><text class="s" x="788" y="569">150</text><text class="s" x="820" y="569">200</text><text class="s" x="851.500" y="569">300</text><text class="s" x="883" y="569">400</text><text class="s" x="915" y="569">500</text><text class="s" x="946.500" y="569">700</text><text class="s" x="978" y="569">1000</text>
<rect x="1006" y="453" width="16" height="139" fill="#333"/>
<rect x="1007" y="462" width="14" height="121" rx="5" fill="url(#thv)"/>
<path d="M1014 455l3 4h-6zM1014 590l3-4h-6z" fill="#aaa"/>
</svg>
</body></html>
